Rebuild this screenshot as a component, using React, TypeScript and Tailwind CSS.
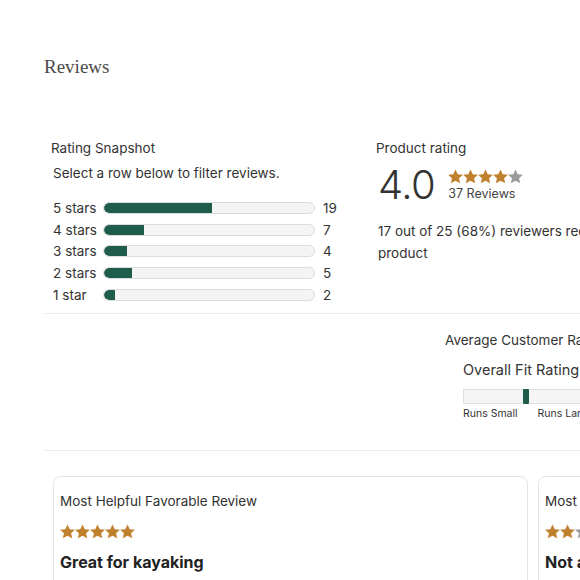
import React from "react";

const rows = [
  { label: "5 stars", count: 19 },
  { label: "4 stars", count: 7 },
  { label: "3 stars", count: 4 },
  { label: "2 stars", count: 5 },
  { label: "1 star", count: 2 },
];
const total = 37;

function Star({ filled, size = 15 }: { filled: boolean; size?: number }) {
  return (
    <svg width={size} height={size} viewBox="0 0 24 24" className="shrink-0">
      <path
        d="M12 0.6l3.6 7.6 8.3.9-6.2 5.6 1.8 8.2L12 18.7l-7.5 4.2 1.8-8.2L0.1 9.1l8.3-.9z"
        fill={filled ? "#c0812f" : "#9c9c9c"}
      />
    </svg>
  );
}

function Stars({ value, size }: { value: number; size?: number }) {
  return (
    <div className="flex">
      {[1, 2, 3, 4, 5].map((i) => (
        <Star key={i} filled={i <= value} size={size} />
      ))}
    </div>
  );
}

export default function App() {
  return (
    <div className="h-[580px] w-[580px] overflow-hidden bg-white text-[#333] font-['Inter',sans-serif]">
      <div className="w-[900px] pl-[44px]">
        <h2 className="pt-[55px] font-['Liberation_Serif',serif] text-[19px] leading-6 text-[#4a4a4a]">
          Reviews
        </h2>

        <div className="mt-[59px] flex">
          {/* rating snapshot */}
          <div className="w-[332px] pl-[7px]">
            <p className="text-[13.5px] leading-5">Rating Snapshot</p>
            <p className="mt-[5px] pl-[2px] text-[13.5px] leading-5">Select a row below to filter reviews.</p>
            <div className="mt-[14px] pl-[2px]">
              {rows.map((r) => (
                <div key={r.label} className="flex h-[21.75px] items-center text-[13.5px]">
                  <span className="w-[50px]">{r.label}</span>
                  <div className="relative h-[12px] w-[212px] overflow-hidden rounded-full border border-[#dcdcdc] bg-[#f4f4f4]">
                    <div
                      className="h-full rounded-l-full bg-[#1f5c4b]"
                      style={{ width: `${(r.count / total) * 100}%` }}
                    />
                  </div>
                  <span className="ml-[8px]">{r.count}</span>
                </div>
              ))}
            </div>
          </div>

          {/* product rating */}
          <div className="w-[320px]">
            <p className="text-[13.5px] leading-5">Product rating</p>
            <div className="mt-[7px] flex items-center pl-[2px]">
              <span className="text-[40px] font-light leading-10 tracking-[-0.5px]">4.0</span>
              <div className="ml-[13px] flex flex-col pt-[1px]">
                <Stars value={4} />
                <span className="mt-[2px] text-[12.5px] leading-4 text-[#444]">37 Reviews</span>
              </div>
            </div>
            <p className="mt-[15px] pl-[2px] text-[13.5px] leading-[22px]">
              17 out of 25 (68%) reviewers recommend this product
            </p>
          </div>
        </div>

        <div className="mt-[7px] border-t border-[#ececec]" />

        {/* average customer ratings */}
        <div className="pl-[401px] pt-[16px]">
          <p className="text-[13.5px] leading-5">Average Customer Ratings</p>
          <div className="pl-[18px]">
            <p className="mt-[10px] text-[14.5px] leading-5">Overall Fit Rating</p>
            <div className="relative mt-[9px] h-[15px] w-[240px] border border-[#e0e0e0] bg-[#f5f5f5]">
              <div className="absolute -top-px left-[59px] h-[15px] w-[6px] rounded-[1px] bg-[#1f5c4b]" />
            </div>
            <div className="mt-[2px] flex gap-[20px] text-[10.5px] leading-4">
              <span>Runs Small</span>
              <span>Runs Large</span>
            </div>
          </div>
        </div>

        <div className="mt-[28px] border-t border-[#ececec]" />

        {/* review cards */}
        <div className="flex gap-[10px] pl-[9px] pt-[25px]">
          <div className="h-[140px] w-[475px] shrink-0 rounded-lg border border-[#e4e4e4] px-[6px] pt-[14px]">
            <p className="text-[13.5px] leading-5">Most Helpful Favorable Review</p>
            <div className="mt-[13px]">
              <Stars value={5} size={15} />
            </div>
            <p className="mt-[11px] text-[16px] font-bold leading-6 text-[#222]">Great for kayaking</p>
          </div>
          <div className="h-[140px] w-[475px] shrink-0 rounded-lg border border-[#e4e4e4] px-[6px] pt-[14px]">
            <p className="text-[13.5px] leading-5">Most Helpful Critical Review</p>
            <div className="mt-[13px]">
              <Stars value={2} size={15} />
            </div>
            <p className="mt-[11px] text-[16px] font-bold leading-6 text-[#222]">Not as expected</p>
          </div>
        </div>
      </div>
    </div>
  );
}
